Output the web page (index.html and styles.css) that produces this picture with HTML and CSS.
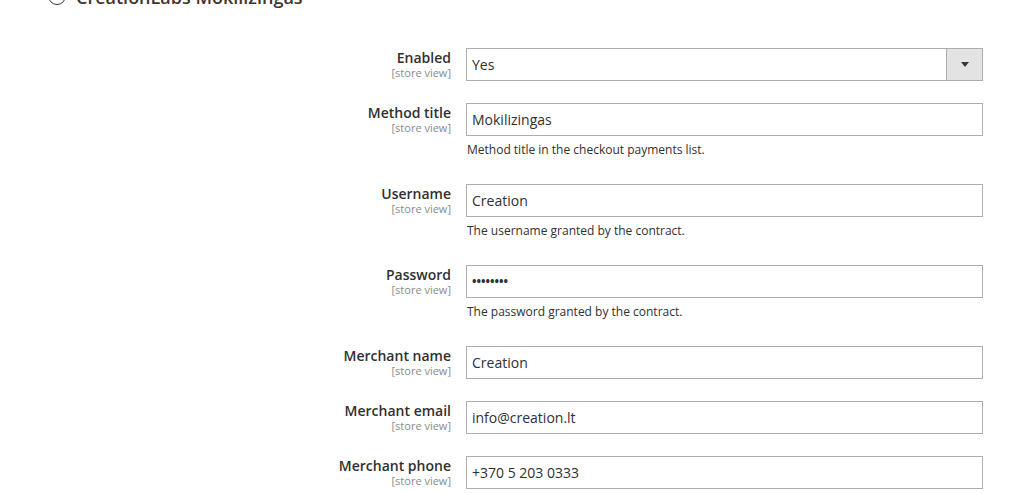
FILE: index.html
```html
<!DOCTYPE html>
<html lang="en">
<head>
<meta charset="utf-8">
<title>CreationLabs Mokilizingas</title>
<link rel="stylesheet" href="styles.css">
</head>
<body>
<div class="section-title">
  <span class="section-toggle"></span>
  <span class="section-name">CreationLabs Mokilizingas</span>
</div>
<div class="config-form">
  <div class="row">
    <div class="label"><span class="label-text">Enabled</span><span class="scope">[store view]</span></div>
    <div class="control">
      <div class="field select"><span class="field-value">Yes</span><span class="select-btn"><span class="arrow"></span></span></div>
    </div>
  </div>
  <div class="row">
    <div class="label"><span class="label-text">Method title</span><span class="scope">[store view]</span></div>
    <div class="control">
      <div class="field"><span class="field-value">Mokilizingas</span></div>
      <p class="note">Method title in the checkout payments list.</p>
    </div>
  </div>
  <div class="row">
    <div class="label"><span class="label-text">Username</span><span class="scope">[store view]</span></div>
    <div class="control">
      <div class="field"><span class="field-value">Creation</span></div>
      <p class="note">The username granted by the contract.</p>
    </div>
  </div>
  <div class="row">
    <div class="label"><span class="label-text">Password</span><span class="scope">[store view]</span></div>
    <div class="control">
      <div class="field"><span class="field-value password">••••••••</span></div>
      <p class="note">The password granted by the contract.</p>
    </div>
  </div>
  <div class="row">
    <div class="label"><span class="label-text">Merchant name</span><span class="scope">[store view]</span></div>
    <div class="control">
      <div class="field"><span class="field-value">Creation</span></div>
    </div>
  </div>
  <div class="row">
    <div class="label"><span class="label-text">Merchant email</span><span class="scope">[store view]</span></div>
    <div class="control">
      <div class="field"><span class="field-value">info@creation.lt</span></div>
    </div>
  </div>
  <div class="row">
    <div class="label"><span class="label-text">Merchant phone</span><span class="scope">[store view]</span></div>
    <div class="control">
      <div class="field"><span class="field-value">+370 5 203 0333</span></div>
    </div>
  </div>
</div>
</body>
</html>
```

FILE: styles.css
```css
html, body {
  margin: 0;
  padding: 0;
  background: #ffffff;
  overflow: hidden;
}

body {
  font-family: "Open Sans", "Liberation Sans", sans-serif;
  color: #303030;
  width: 1024px;
  height: 494px;
}

.section-title {
  display: flex;
  align-items: center;
  gap: 10px;
  height: 24px;
  margin-top: -15px;
  padding-left: 48px;
}

.section-toggle {
  width: 16px;
  height: 16px;
  border: 1px solid #41362f;
  border-radius: 50%;
  box-sizing: content-box;
  margin-top: -3px;
}

.section-name {
  font-size: 18px;
  font-weight: 600;
  line-height: 24px;
  color: #41362f;
}

.config-form {
  display: flex;
  flex-direction: column;
  gap: 22px;
  margin-top: 39px;
}

.row {
  display: grid;
  grid-template-columns: 451px 517px;
  column-gap: 15px;
}

.label {
  display: flex;
  flex-direction: column;
  align-items: flex-end;
  padding-top: 1px;
}

.label-text {
  font-size: 14px;
  font-weight: 600;
  line-height: 18px;
  color: #303030;
}

.scope {
  font-size: 11px;
  line-height: 12px;
  color: #8a8a8a;
}

.control {
  display: flex;
  flex-direction: column;
}

.field {
  box-sizing: border-box;
  height: 33px;
  border: 1px solid #adadad;
  background: #ffffff;
  display: flex;
  align-items: center;
  padding-left: 5px;
}

.field-value {
  font-size: 14px;
  line-height: 31px;
  color: #303030;
  flex: 1;
}

.field-value.password {
  font-size: 12px;
  letter-spacing: 0;
  font-weight: 700;
}

.select {
  padding-right: 0;
}

.select-btn {
  width: 35px;
  height: 31px;
  background: #e3e3e3;
  border-left: 1px solid #adadad;
  display: flex;
  align-items: center;
  justify-content: center;
}

.arrow {
  width: 0;
  height: 0;
  border-left: 4px solid transparent;
  border-right: 4px solid transparent;
  border-top: 5px solid #41362f;
}

.note {
  margin: 5px 0 4px 1px;
  font-size: 12px;
  line-height: 17px;
  color: #303030;
}
```
